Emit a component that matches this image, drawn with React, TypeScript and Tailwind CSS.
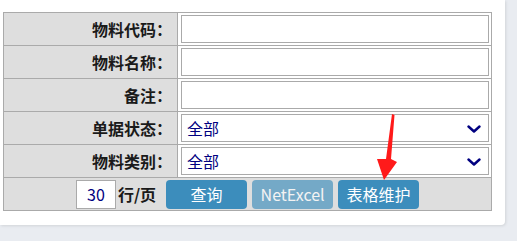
const font = { fontFamily: '"Noto Sans CJK SC", "Noto Sans", sans-serif' };

const labelCell =
  "border border-[#aaa] bg-[#dedede] text-right pr-[5px] text-[16px] font-bold text-[#1a1a1a] w-[174px] h-[33px] p-0";
const fieldCell = "border border-[#aaa] bg-white h-[33px] py-[2px] pl-[3px] pr-[2px]";

function TextRow({ label }: { label: string }) {
  return (
    <tr>
      <td className={labelCell}>{label}</td>
      <td className={fieldCell}>
        <input className="block w-full h-[28px] border border-[#aaa] bg-white outline-none" />
      </td>
    </tr>
  );
}

function SelectRow({ label }: { label: string }) {
  return (
    <tr>
      <td className={labelCell}>{label}</td>
      <td className={fieldCell}>
        <div className="relative h-[28px] border border-[#aaa] bg-white flex items-center pl-[5px] text-[16px] text-[#000080]">
          全部
          <svg className="absolute right-[7px] top-[10px]" width="14" height="8" viewBox="0 0 14 8">
            <polyline points="1.5,1.5 7,6.5 12.5,1.5" fill="none" stroke="#000080" strokeWidth="2.4" strokeLinecap="round" strokeLinejoin="round" />
          </svg>
        </div>
      </td>
    </tr>
  );
}

export default function App() {
  return (
    <div className="relative w-[517px] h-[241px] bg-[#e9ecf1] overflow-hidden" style={font}>
      <div className="w-[505px] h-[225px] bg-white rounded-br-[4px] shadow-[1px_1px_3px_rgba(0,0,0,0.1)] pt-[12px] pl-[3px]">
        <table className="border-collapse w-[489px] leading-none">
          <tbody>
            <TextRow label="物料代码：" />
            <TextRow label="物料名称：" />
            <TextRow label="备注：" />
            <SelectRow label="单据状态：" />
            <SelectRow label="物料类别：" />
            <tr>
              <td colSpan={2} className="border border-[#aaa] bg-[#dedede] h-[33px] p-0">
                <div className="flex items-center justify-center">
                  <input
                    defaultValue="30"
                    className="w-[40px] h-[29px] border border-[#aaa] bg-white text-center text-[16px] text-[#000080] outline-none"
                  />
                  <span className="ml-[2px] text-[16px] font-bold text-[#1a1a1a]">行/页</span>
                  <button className="ml-[10px] w-[81px] h-[29px] rounded-[4px] bg-[#3c8dbc] text-white text-[16px]">
                    查询
                  </button>
                  <button className="ml-[5px] w-[81px] h-[29px] rounded-[4px] bg-[#3c8dbc] text-white text-[16px] opacity-65">
                    NetExcel
                  </button>
                  <button className="ml-[5px] w-[81px] h-[29px] rounded-[4px] bg-[#3c8dbc] text-white text-[16px]">
                    表格维护
                  </button>
                </div>
              </td>
            </tr>
          </tbody>
        </table>
      </div>

      {/* red annotation arrow */}
      <svg className="absolute left-0 top-0 pointer-events-none" width="517" height="241">
        <polygon
          points="392,114 394.5,115 391,159 397,162 384,180 377,159 386,159"
          fill="#ff1a1a"
        />
      </svg>
    </div>
  );
}
